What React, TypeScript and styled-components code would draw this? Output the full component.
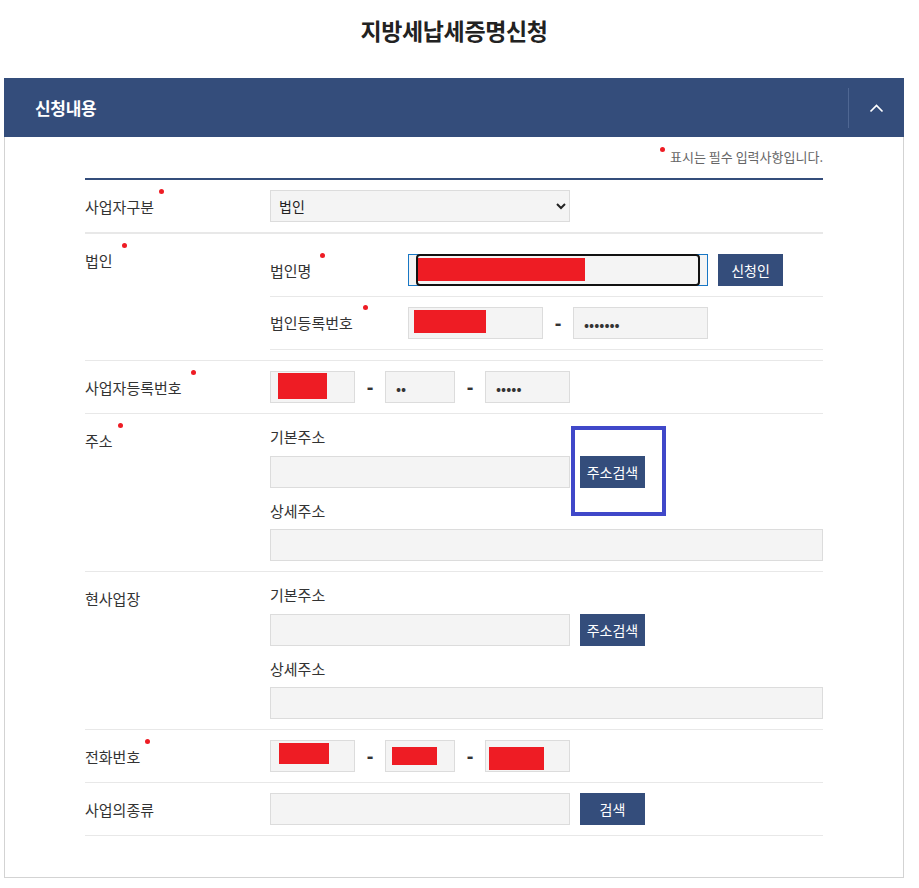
import React from 'react';
import styled, { createGlobalStyle, css } from 'styled-components';

const GlobalStyle = createGlobalStyle`
  html, body {
    margin: 0;
    padding: 0;
    background: #fff;
  }
  body {
    font-family: "Noto Sans CJK KR", "Noto Sans", sans-serif;
    color: #333;
  }
  * {
    box-sizing: border-box;
  }
`;

const navy = '#344d7b';

const Page = styled.div`
  width: 919px;
  padding: 0 15px 0 4px;
`;

const PageTitle = styled.h1`
  margin: 0;
  padding: 15px 0 33px;
  font-size: 23px;
  line-height: 30px;
  font-weight: 700;
  text-align: center;
  color: #222;
  letter-spacing: -0.4px;
`;

const Panel = styled.section`
  width: 900px;
`;

const PanelHeader = styled.div`
  display: flex;
  align-items: center;
  justify-content: space-between;
  height: 59px;
  padding-left: 31px;
  background: ${navy};
`;

const PanelTitle = styled.h2`
  margin: 0;
  font-size: 17px;
  font-weight: 700;
  color: #fff;
  letter-spacing: -0.3px;
`;

const ToggleButton = styled.button`
  display: flex;
  align-items: center;
  justify-content: center;
  width: 56px;
  height: 40px;
  padding: 0;
  border: none;
  border-left: 1px solid #4f6793;
  background: transparent;
  cursor: pointer;
`;

const PanelBody = styled.div`
  padding: 0 80px 41px;
  border: 1px solid #d3d3d3;
  border-top: none;
`;

const Notice = styled.p`
  margin: 0 0 11px;
  padding-top: 10px;
  font-size: 13px;
  line-height: 20px;
  text-align: right;
  color: #666;
`;

const FormTable = styled.div`
  border-top: 2px solid ${navy};
`;

const Row = styled.div<{ $thick?: boolean }>`
  display: grid;
  grid-template-columns: 185px 1fr;
  border-bottom: ${({ $thick }) => ($thick ? '2px' : '1px')} solid #e8e8e8;
`;

const RowLabel = styled.div`
  padding-top: 16px;
  font-size: 15px;
  line-height: 22px;
  color: #333;
`;

const RowContent = styled.div<{ $pad?: string }>`
  padding: ${({ $pad }) => $pad || '10px 0'};
`;

const Inline = styled.div`
  display: flex;
  align-items: center;
`;

const SubRow = styled.div`
  display: grid;
  grid-template-columns: 138px 1fr;
  align-items: center;
  padding: 10px 0;
  border-bottom: 1px solid #e8e8e8;
`;

const SubLabel = styled.div<{ $gap?: number }>`
  font-size: 15px;
  line-height: 22px;
  color: #333;
  margin-top: ${({ $gap }) => ($gap ? `${$gap}px` : '0')};
`;

const AddressLabel = styled.div<{ $second?: boolean }>`
  font-size: 15px;
  line-height: 22px;
  margin: ${({ $second }) => ($second ? '12px 0 7px' : '0 0 8px')};
  color: #333;
`;

const RequiredDot = styled.span<{ $gap?: number; $raise?: number }>`
  display: inline-block;
  position: relative;
  top: ${({ $raise }) => (typeof $raise === 'number' ? -$raise : -7)}px;
  width: 5px;
  height: 5px;
  margin-left: ${({ $gap }) => $gap ?? 5}px;
  margin-right: ${({ $gap }) => ($gap === 0 ? 5 : 0)}px;
  border-radius: 50%;
  background: #ee1c24;
  vertical-align: top;
`;

const fieldBase = css<{ $w?: number }>`
  width: ${({ $w }) => ($w ? `${$w}px` : '100%')};
  height: 32px;
  border: 1px solid #dcdcdc;
  background: #f4f4f4;
`;

const TextInput = styled.input<{ $w?: number }>`
  ${fieldBase};
  display: block;
  padding: 0 10px;
  font-family: "Noto Sans CJK KR", sans-serif;
  font-size: 15px;
  color: #333;
  outline: none;
`;

const MaskedField = styled.div<{ $w?: number }>`
  ${fieldBase};
  display: flex;
  align-items: flex-start;
  overflow: hidden;
`;

const Redact = styled.span<{ $x: number; $y: number; $w: number; $h: number }>`
  display: block;
  flex: none;
  margin-left: ${({ $x }) => $x}px;
  margin-top: ${({ $y }) => $y}px;
  width: ${({ $w }) => $w}px;
  height: ${({ $h }) => $h}px;
  background: #ee1c24;
`;

const FocusedField = styled.div`
  position: relative;
  width: 300px;
  height: 32px;
  border: 1px solid #1877c5;
  background: #f4f4f4;
`;

const FocusRing = styled.div`
  position: absolute;
  top: -1px;
  bottom: -1px;
  left: 7px;
  right: 7px;
  display: flex;
  align-items: flex-start;
  border: 2px solid #111;
  border-radius: 4px;
  background: #f4f4f4;
  overflow: hidden;
`;

const Select = styled.select`
  ${fieldBase};
  width: 300px;
  padding: 0 4px;
  font-family: "Noto Sans CJK KR", sans-serif;
  font-size: 14px;
  color: #222;
  outline: none;
`;

const Dash = styled.span<{ $w?: number }>`
  width: ${({ $w }) => $w ?? 30}px;
  text-align: center;
  font-family: "Liberation Sans", sans-serif;
  font-weight: 700;
  font-size: 20px;
  line-height: 20px;
  color: #333;
`;

const NavyButton = styled.button`
  width: 65px;
  height: 32px;
  padding: 0;
  border: none;
  background: ${navy};
  color: #fff;
  font-family: "Noto Sans CJK KR", sans-serif;
  font-size: 14px;
  cursor: pointer;
`;

const ButtonSlot = styled.div`
  position: relative;
  margin-left: 10px;
`;

const Highlight = styled.span`
  position: absolute;
  left: -9px;
  right: -21px;
  top: -30px;
  bottom: -28px;
  border: 4px solid #4048c9;
  pointer-events: none;
`;

const ChevronUp = () => (
  <svg width="15" height="10" viewBox="0 0 15 10" fill="none">
    <polyline points="1.5,8.5 7.5,2.5 13.5,8.5" stroke="#fff" strokeWidth="1.7" />
  </svg>
);

const AddressBlock: React.FC<{ highlight?: boolean }> = ({ highlight }) => (
  <>
    <AddressLabel>기본주소</AddressLabel>
    <Inline>
      <TextInput $w={300} readOnly />
      <ButtonSlot>
        <NavyButton type="button">주소검색</NavyButton>
        {highlight && <Highlight />}
      </ButtonSlot>
    </Inline>
    <AddressLabel $second>상세주소</AddressLabel>
    <TextInput readOnly />
  </>
);

export default function App() {
  return (
    <Page>
      <GlobalStyle />
      <PageTitle>지방세납세증명신청</PageTitle>
      <Panel>
        <PanelHeader>
          <PanelTitle>신청내용</PanelTitle>
          <ToggleButton type="button" aria-label="접기">
            <ChevronUp />
          </ToggleButton>
        </PanelHeader>
        <PanelBody>
          <Notice>
            <RequiredDot $gap={0} $raise={0} />
            표시는 필수 입력사항입니다.
          </Notice>
          <FormTable>
            <Row $thick>
              <RowLabel>
                사업자구분
                <RequiredDot $gap={5} />
              </RowLabel>
              <RowContent>
                <Select defaultValue="corp">
                  <option value="corp">법인</option>
                  <option value="person">개인</option>
                </Select>
              </RowContent>
            </Row>

            <Row>
              <RowLabel>
                법인
                <RequiredDot $gap={9} />
              </RowLabel>
              <RowContent>
                <SubRow>
                  <SubLabel $gap={2}>
                    법인명
                    <RequiredDot $gap={9} />
                  </SubLabel>
                  <Inline>
                    <FocusedField>
                      <FocusRing>
                        <Redact $x={-2} $y={2} $w={169} $h={23} />
                      </FocusRing>
                    </FocusedField>
                    <ButtonSlot>
                      <NavyButton type="button">신청인</NavyButton>
                    </ButtonSlot>
                  </Inline>
                </SubRow>
                <SubRow>
                  <SubLabel>
                    법인등록번호
                    <RequiredDot $gap={10} />
                  </SubLabel>
                  <Inline>
                    <MaskedField $w={135}>
                      <Redact $x={5} $y={2} $w={72} $h={23} />
                    </MaskedField>
                    <Dash>-</Dash>
                    <TextInput $w={135} type="password" defaultValue="1234567" readOnly />
                  </Inline>
                </SubRow>
              </RowContent>
            </Row>

            <Row>
              <RowLabel>
                사업자등록번호
                <RequiredDot $gap={9} />
              </RowLabel>
              <RowContent>
                <Inline>
                  <MaskedField $w={85}>
                    <Redact $x={7} $y={1} $w={49} $h={26} />
                  </MaskedField>
                  <Dash>-</Dash>
                  <TextInput $w={70} type="password" defaultValue="12" readOnly />
                  <Dash>-</Dash>
                  <TextInput $w={85} type="password" defaultValue="12345" readOnly />
                </Inline>
              </RowContent>
            </Row>

            <Row>
              <RowLabel>
                주소
                <RequiredDot $gap={5} />
              </RowLabel>
              <RowContent $pad="12px 0 10px">
                <AddressBlock highlight />
              </RowContent>
            </Row>

            <Row>
              <RowLabel>현사업장</RowLabel>
              <RowContent $pad="12px 0 10px">
                <AddressBlock />
              </RowContent>
            </Row>

            <Row>
              <RowLabel>
                전화번호
                <RequiredDot $gap={5} />
              </RowLabel>
              <RowContent>
                <Inline>
                  <MaskedField $w={85}>
                    <Redact $x={8} $y={2} $w={50} $h={21} />
                  </MaskedField>
                  <Dash>-</Dash>
                  <MaskedField $w={70}>
                    <Redact $x={6} $y={6} $w={45} $h={18} />
                  </MaskedField>
                  <Dash>-</Dash>
                  <MaskedField $w={85}>
                    <Redact $x={3} $y={6} $w={55} $h={23} />
                  </MaskedField>
                </Inline>
              </RowContent>
            </Row>

            <Row>
              <RowLabel>사업의종류</RowLabel>
              <RowContent>
                <Inline>
                  <TextInput $w={300} readOnly />
                  <ButtonSlot>
                    <NavyButton type="button">검색</NavyButton>
                  </ButtonSlot>
                </Inline>
              </RowContent>
            </Row>
          </FormTable>
        </PanelBody>
      </Panel>
    </Page>
  );
}
